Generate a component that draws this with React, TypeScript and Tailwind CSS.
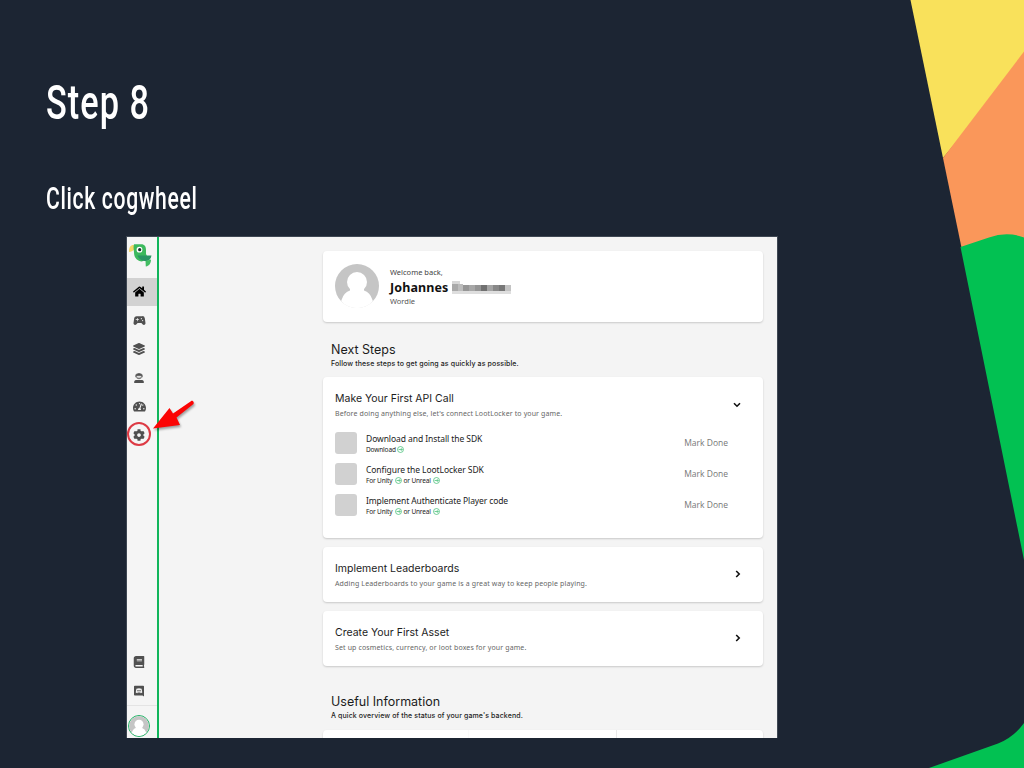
import type { ReactNode } from "react";
import { FaHome, FaLayerGroup, FaTachometerAlt, FaCog, FaBook } from "react-icons/fa";
import { MdSportsEsports } from "react-icons/md";

function Parrot() {
  return (
    <svg className="ml-px h-6 w-6" viewBox="0 0 24 24">
      <path d="M6 2C3 1.500 .8 4 1 9C3 9 5 7.500 7 6.500z" fill="#f5d76a" />
      <path d="M6 1.300H13C17 1.300 18 4 18 7V11L20 15L14 18.500C9 18 6 14.500 6 9.500C6 7 5 5 6 1.300z" fill="#3cb95d" />
      <path d="M9.500 12.500H23.500C23 16 21 18 18 18C14 18 10.500 16 9.500 12.500z" fill="#2a9664" />
      <path d="M17.500 18L23 16.500C23 20 21.500 22.800 17.800 23.500z" fill="#42bd62" />
      <circle cx="11.500" cy="6.700" r="2.900" fill="#fff" />
      <circle cx="11.700" cy="6.700" r="1.600" fill="#17352b" />
    </svg>
  );
}

function Operator() {
  return (
    <svg className="size-3" viewBox="0 0 12 12">
      <path d="M2.200 3.600C2.500 .2 9.500 .2 9.800 3.600V5.300H8.800C8.500 7.800 3.500 7.800 3.200 5.300H2.200z" fill="#777" />
      <path d="M3.800 3.600C5 4 7 4 8.200 3.600V4.500C7.900 6.200 4.100 6.200 3.800 4.500z" fill="#ddd" />
      <path d="M3.200 2.800L6 1.500L8.800 2.800V3.900L6 3.200L3.200 3.900z" fill="#505050" />
      <path d="M1.200 11V9.800C1.200 8.400 2.700 8 4 8H8C9.300 8 10.800 8.400 10.800 9.800V11z" fill="#505050" />
    </svg>
  );
}

function ChatBook() {
  return (
    <svg className="size-3" viewBox="0 0 12 12">
      <path d="M1.800 .8H10.200Q11 .8 11 1.600V11.400L9.500 10.500H1.800Q1 10.500 1 9.700V1.600Q1 .8 1.800 .8z" fill="#505050" />
      <path d="M3.400 3.800Q6 2.800 8.600 3.800L9.300 7.600L7.800 8.200L7.300 7.500H4.700L4.200 8.200L2.700 7.600z" fill="#f2f2f2" />
      <path d="M4 5.200H8V6.300H4z" fill="#777" />
    </svg>
  );
}

function Avatar({ className }: { className: string }) {
  return (
    <svg className={className} viewBox="0 0 44 44">
      <defs>
        <clipPath id="avatar-disc"><circle cx="22" cy="22" r="22" /></clipPath>
      </defs>
      <g clipPath="url(#avatar-disc)">
        <path d="M0 0H44V44H0z" fill="#c5c5c5" />
        <circle cx="22" cy="18" r="10" fill="#fff" />
        <path d="M15 22H29V26.500Q35 28 37.500 36L40 44H4L6.500 36Q9 28 15 26.500z" fill="#fff" />
        <path d="M0 38.500H44V44H0z" fill="#fff" />
      </g>
    </svg>
  );
}

function Go() {
  return (
    <svg className="ml-px inline-block size-[7px] align-[-1px]" viewBox="0 0 8 8" fill="none" stroke="#35b96c" strokeWidth=".8">
      <circle cx="4" cy="4" r="3.400" />
      <path d="M1.800 4H6M4.500 2.500L6 4L4.500 5.500" />
    </svg>
  );
}

function Chevron({ className }: { className: string }) {
  return (
    <svg className={className} viewBox="0 0 10 10" fill="none" stroke="#111" strokeWidth="1.600">
      <path d="M3.200 2L6.200 5L3.200 8" />
    </svg>
  );
}

function NavItem({ children, active = false }: { children: ReactNode; active?: boolean }) {
  return (
    <div className={`flex h-[28.7px] shrink-0 items-center pl-[6px] ${active ? "bg-[#d2d2d2] text-black" : "text-[#505050]"}`}>
      {children}
    </div>
  );
}

function Sidebar() {
  return (
    <aside className="relative flex w-8 shrink-0 flex-col border-r-2 border-[#11b55b] bg-[#f5f5f5]">
      <div className="h-[40.6px] shrink-0 pt-[6px]"><Parrot /></div>
      <NavItem active><FaHome className="size-[13px]" /></NavItem>
      <NavItem><MdSportsEsports className="-ml-px size-[15px]" /></NavItem>
      <NavItem><FaLayerGroup className="size-3" /></NavItem>
      <NavItem><Operator /></NavItem>
      <NavItem><FaTachometerAlt className="size-[13px]" /></NavItem>
      <NavItem><FaCog className="size-3" /></NavItem>
      <div className="flex-1" />
      <NavItem><FaBook className="size-3" /></NavItem>
      <NavItem><ChatBook /></NavItem>
      <div className="flex h-[33px] shrink-0 items-end border-t border-[#e4e4e4] pb-px pl-px">
        <Avatar className="size-[22px] rounded-full border-[1.5px] border-[#24b368]" />
      </div>
      <div className="absolute top-[185px] left-0 size-6 rounded-full border-2 border-[#dd3a44]" />
      <svg className="absolute top-[160px] left-[25px] h-9 w-12 drop-shadow-[1px_2px_1px_rgba(0,0,0,0.35)]" viewBox="0 0 48 36">
        <path d="M1 31.500L17.500 11L21 16.500L40 3.500Q42.500 4.500 41.500 7L24.500 20.500L28 28z" fill="#fb0505" />
      </svg>
    </aside>
  );
}

function SectionTitle({ title, note, noteClass }: { title: string; note: string; noteClass: string }) {
  return (
    <div className="pl-[8.5px] font-['Inter'] whitespace-nowrap text-[#1c1c1c]">
      <h2 className="text-[12.5px] leading-4">{title}</h2>
      <p className={`text-[7px] leading-3 font-medium ${noteClass}`}>{note}</p>
    </div>
  );
}

function CardHead({ title, note, noteClass, open = false }: { title: string; note: string; noteClass: string; open?: boolean }) {
  return (
    <div className="flex items-start justify-between pr-5">
      <div className="whitespace-nowrap">
        <h3 className="font-['Inter'] text-[10.5px] leading-4 text-[#1c1c1c]">{title}</h3>
        <p className={`font-['Noto_Sans'] text-[7px] leading-[13px] text-[#666] ${noteClass}`}>{note}</p>
      </div>
      <Chevron className={open ? "mt-[9px] mr-px size-[10px] rotate-90" : "mt-[8px] size-[10px]"} />
    </div>
  );
}

function Step({ title, titleClass, children }: { title: string; titleClass: string; children: ReactNode }) {
  return (
    <div className="flex h-[31px] items-start">
      <div className="size-[22px] shrink-0 rounded-[3px] bg-[#d1d1d1]" />
      <div className="ml-[9px] flex-1 pt-px font-['Noto_Sans'] whitespace-nowrap text-[#222]">
        <div className={`text-[8.5px] leading-3 ${titleClass}`}>{title}</div>
        <div className="text-[6.5px] leading-[10px] tracking-[-0.15px]">{children}</div>
      </div>
      <div className="mr-[35px] font-['Open_Sans'] text-[8.5px] leading-[22px] text-[#777]">Mark Done</div>
    </div>
  );
}

const card = "shrink-0 rounded bg-white shadow-[0_1px_2px_rgba(0,0,0,0.18)]";

function NameMask() {
  return (
    <svg className="ml-1 h-[14px] w-[59px]" viewBox="0 0 59 14" shapeRendering="crispEdges">
      <path d="M0 0H8V3H0z" fill="#d7d7d7" />
      <path d="M0 3H6V10H0z" fill="#a9a9a9" />
      <path d="M6 3H11V10H6z" fill="#bcbcbc" />
      <path d="M11 4H17V10H11z" fill="#969696" />
      <path d="M17 4H23V10H17z" fill="#a7a7a7" />
      <path d="M23 4H29V10H23z" fill="#949494" />
      <path d="M29 4H35V10H29z" fill="#707070" />
      <path d="M35 4H41V10H35z" fill="#a4a4a4" />
      <path d="M41 4H47V10H41z" fill="#888" />
      <path d="M47 4H53V10H47z" fill="#777" />
      <path d="M53 4H59V10H53z" fill="#c3c3c3" />
      <path d="M0 10H59V13H0z" fill="#dedede" />
    </svg>
  );
}

function Dashboard() {
  return (
    <div className="flex h-[502px] w-[652px] overflow-hidden border border-b-0 border-[#3e4753] bg-[#f4f4f4]">
      <Sidebar />
      <main className="ml-[163.5px] flex w-[440.5px] flex-col pt-[14px]">
        <section className={`flex h-[71px] pt-[13px] pl-[12.5px] ${card}`}>
          <Avatar className="size-[44px]" />
          <div className="ml-[11px] pt-[3px] font-['Noto_Sans'] whitespace-nowrap">
            <p className="text-[7.5px] leading-[10px] text-[#444]">Welcome back,</p>
            <div className="flex h-5 items-center pt-px">
              <b className="text-[12.5px] leading-5 tracking-[0.1px] text-[#111]">Johannes</b>
              <NameMask />
            </div>
            <p className="text-[7.5px] leading-[8px] text-[#555]">Wordle</p>
          </div>
        </section>
        <div className="h-[55px] shrink-0 pt-[19.500px]">
          <SectionTitle title="Next Steps" note="Follow these steps to get going as quickly as possible." noteClass="tracking-[0.12px]" />
        </div>
        <section className={`h-[161px] pt-[14px] pl-[12.5px] ${card}`}>
          <CardHead open title="Make Your First API Call" note="Before doing anything else, let's connect LootLocker to your game." noteClass="tracking-[0.12px]" />
          <div className="pt-[12px]">
            <Step title="Download and Install the SDK" titleClass="tracking-[-0.07px]">Download<Go /></Step>
            <Step title="Configure the LootLocker SDK" titleClass="tracking-[-0.07px]">For Unity <Go /> or Unreal <Go /></Step>
            <Step title="Implement Authenticate Player code" titleClass="tracking-[-0.11px]">For Unity <Go /> or Unreal <Go /></Step>
          </div>
        </section>
        <section className={`mt-[9px] h-[55px] pt-[14px] pl-[12.5px] ${card}`}>
          <CardHead title="Implement Leaderboards" note="Adding Leaderboards to your game is a great way to keep people playing." noteClass="tracking-[0.14px]" />
        </section>
        <section className={`mt-[9px] h-[55px] pt-[14px] pl-[12.5px] ${card}`}>
          <CardHead title="Create Your First Asset" note="Set up cosmetics, currency, or loot boxes for your game." noteClass="tracking-[0.13px]" />
        </section>
        <div className="h-[64px] shrink-0 pt-[28px]">
          <SectionTitle title="Useful Information" note="A quick overview of the status of your game's backend." noteClass="tracking-[0.11px]" />
        </div>
        <section className={`flex h-10 ${card}`}>
          <div className="w-[146px] border-r border-[#fafafa]" />
          <div className="w-[148px] border-r border-[#e9e9e9]" />
        </section>
      </main>
    </div>
  );
}

export default function App() {
  return (
    <div className="relative h-[768px] w-[1024px] overflow-hidden bg-[#1c2533]">
      <svg className="absolute inset-0 h-full w-full" viewBox="0 0 1024 768">
        <path d="M910.500 0H1024V60L943 158z" fill="#f9e15b" />
        <path d="M1024 51.500L943 158L962 250H1024z" fill="#fa975a" />
        <path d="M960.500 247L989 237.500Q1007 231 1024 237.500V560z" fill="#02c152" />
        <path d="M929 768L998 743.500Q1014 737 1024 723V768z" fill="#02c152" />
      </svg>
      <div className="relative flex flex-col items-start">
        <h1 className="mt-[71px] ml-[46px] h-[64px] origin-left scale-x-[0.7] font-['Roboto'] text-[49px] leading-[64px] font-medium tracking-[1.5px] whitespace-nowrap text-white">Step 8</h1>
        <p className="mt-[43px] ml-[46px] h-10 origin-left scale-x-[0.66] font-['Roboto'] text-[32px] leading-10 font-medium tracking-[1px] whitespace-nowrap text-white">Click cogwheel</p>
        <div className="mt-[18px] ml-[126px]"><Dashboard /></div>
      </div>
    </div>
  );
}
